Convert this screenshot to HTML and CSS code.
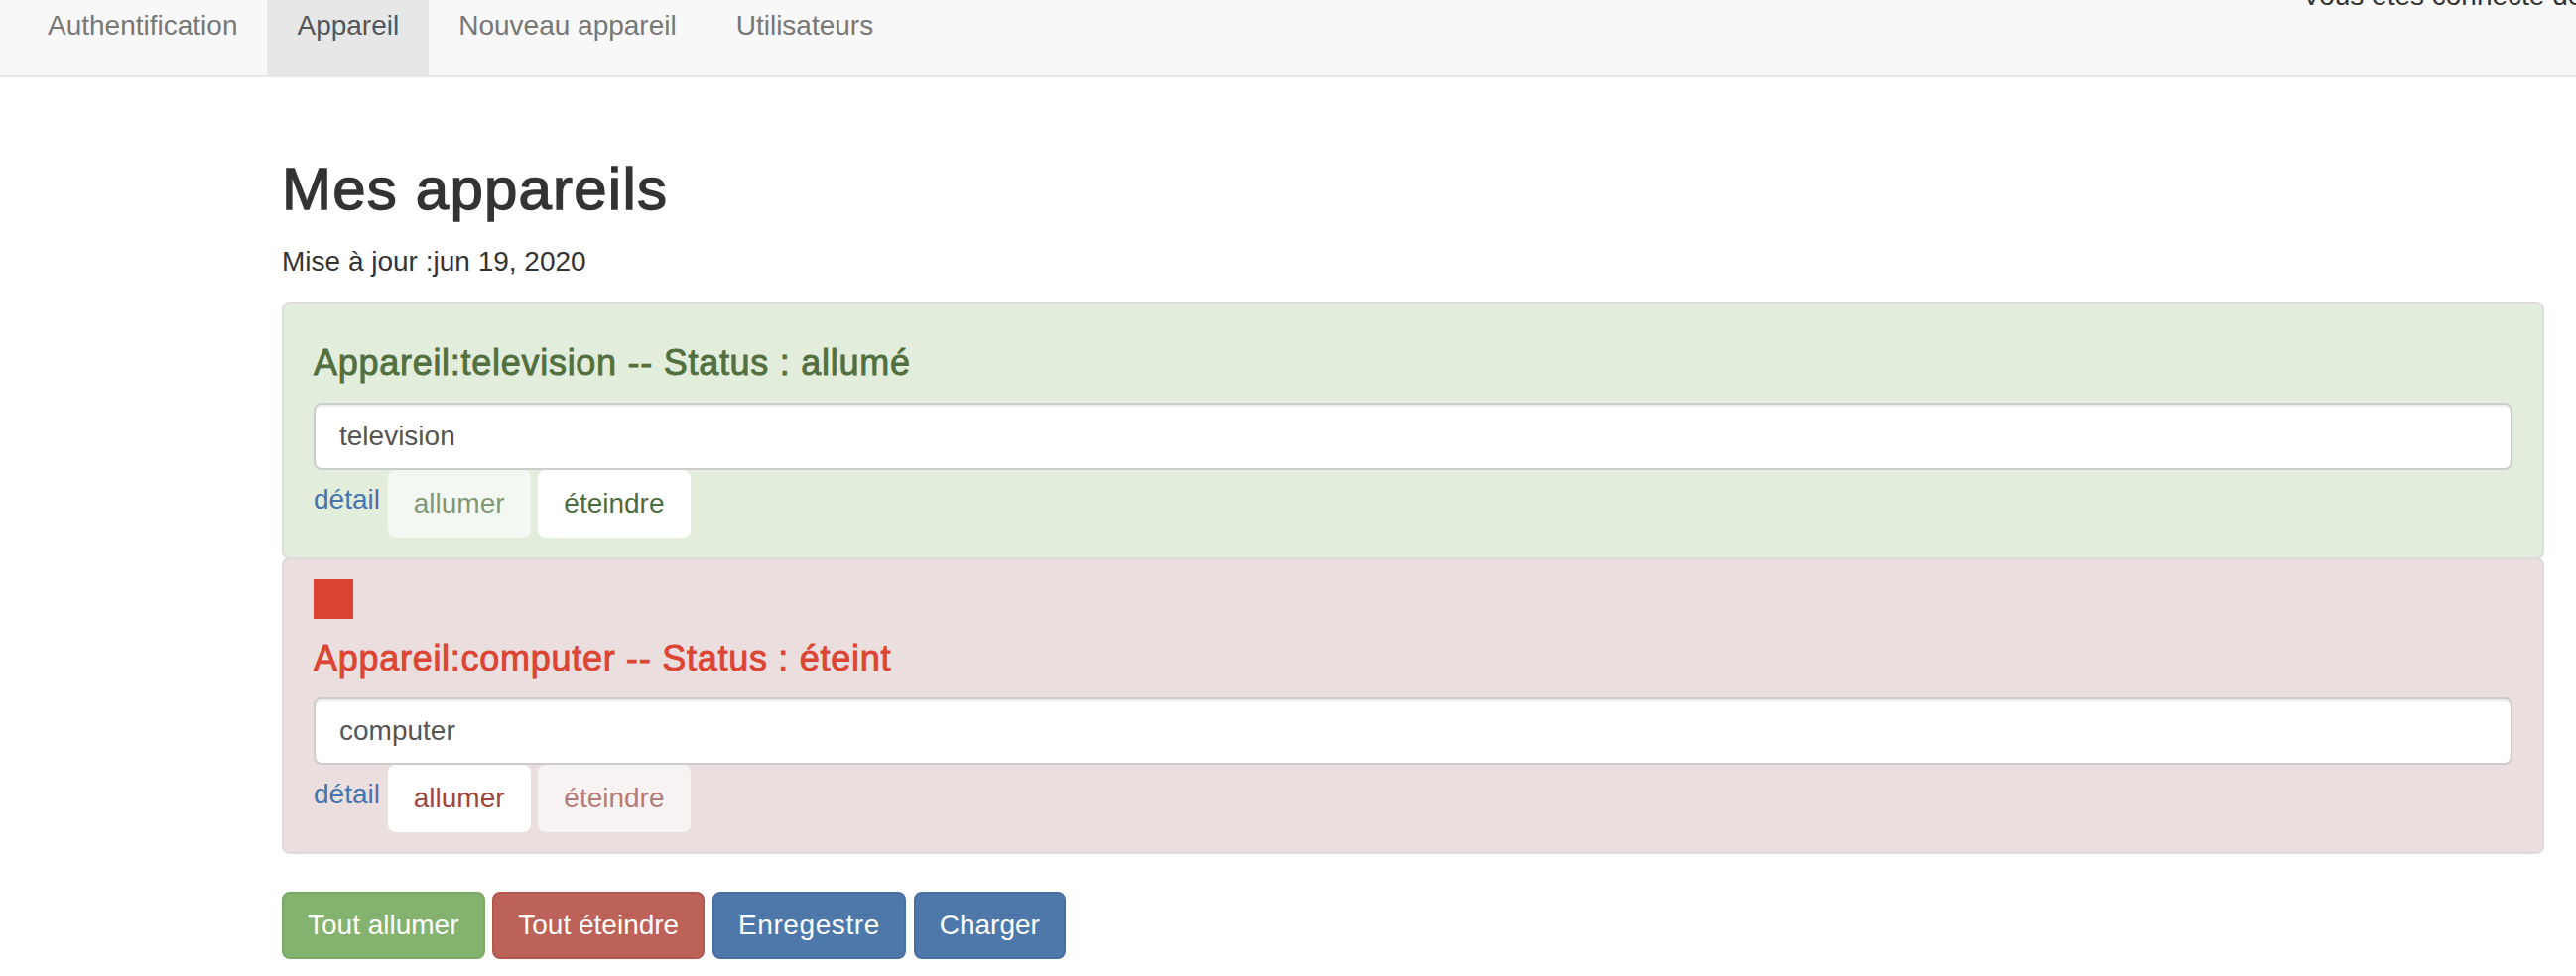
FILE: index.html
```html
<!DOCTYPE html>
<html lang="fr">
<head>
<meta charset="utf-8">
<title>Mes appareils</title>
<link rel="stylesheet" href="styles.css">
</head>
<body>
<nav class="navbar">
  <ul class="nav">
    <li><a href="#">Authentification</a></li>
    <li class="active"><a href="#">Appareil</a></li>
    <li><a href="#">Nouveau appareil</a></li>
    <li><a href="#">Utilisateurs</a></li>
  </ul>
  <p class="navbar-user">Vous êtes connecté depuis</p>
</nav>

<main class="container">
  <h2 class="page-title">Mes appareils</h2>
  <p class="updated">Mise à jour :jun 19, 2020</p>

  <ul class="list-group">
    <li class="device device-on">
      <h4 class="device-title">Appareil:television -- Status : allumé</h4>
      <input class="form-control" type="text" value="television">
      <div class="device-actions">
        <a class="detail-link" href="#">détail</a>
        <button class="btn btn-plain" disabled>allumer</button>
        <button class="btn btn-plain">éteindre</button>
      </div>
    </li>
    <li class="device device-off">
      <div class="status-square"></div>
      <h4 class="device-title">Appareil:computer -- Status : éteint</h4>
      <input class="form-control" type="text" value="computer">
      <div class="device-actions">
        <a class="detail-link" href="#">détail</a>
        <button class="btn btn-plain">allumer</button>
        <button class="btn btn-plain" disabled>éteindre</button>
      </div>
    </li>
  </ul>

  <div class="toolbar">
    <button class="btn btn-success">Tout allumer</button>
    <button class="btn btn-danger">Tout éteindre</button>
    <button class="btn btn-primary btn-save">Enregestre</button>
    <button class="btn btn-primary">Charger</button>
  </div>
</main>
</body>
</html>
```

FILE: styles.css
```css
html, body {
  margin: 0;
  padding: 0;
  background: #ffffff;
}

body {
  font-family: "Liberation Sans", Arial, Helvetica, sans-serif;
  font-size: 28px;
  line-height: 1.42857;
  color: #333333;
}

/* ---------- navbar ---------- */
.navbar {
  display: grid;
  grid-template-columns: 2320px 1fr;
  height: 100px;
  margin-top: -24px;
  margin-bottom: 40px;
  background: #f8f8f8;
  border-bottom: 2px solid #e7e7e7;
  overflow: hidden;
}

.nav {
  display: flex;
  margin: 0;
  padding: 0 0 0 18px;
  list-style: none;
}

.nav a {
  display: block;
  padding: 30px 30px;
  line-height: 40px;
  color: #777777;
  text-decoration: none;
}

.nav .active a {
  background: #e7e7e7;
  color: #555555;
}

.navbar-user {
  margin: 0;
  line-height: 40px;
  white-space: nowrap;
  color: #333333;
}

/* ---------- content ---------- */
.container {
  display: flow-root;
  width: 2280px;
  margin-left: 284px;
}

.page-title {
  margin: 40px 0 20px;
  font-size: 60px;
  font-weight: normal;
  line-height: 1.1;
  letter-spacing: 1.2px;
  -webkit-text-stroke: 1.4px #333333;
  color: #333333;
}

.updated {
  margin: 0 0 20px;
}

.list-group {
  margin: 0 0 40px;
  padding: 0;
  list-style: none;
}

.device {
  padding: 20px 30px;
  border: 2px solid #dcdcdc;
  border-radius: 8px;
  margin-bottom: -2px;
}

.device-on {
  background: #e2eddb;
  color: #4c6c3d;
}

.device-off {
  background: #eadfde;
  color: #9b4740;
}

.device-title {
  margin: 20px 0;
  font-size: 36px;
  font-weight: normal;
  line-height: 1.1;
  letter-spacing: 0.72px;
  -webkit-text-stroke: 0.9px currentColor;
}

.device-on .device-title {
  color: #52703f;
}

.device-off .device-title {
  color: #dc4434;
}

.status-square {
  width: 40px;
  height: 40px;
  background: #db4433;
}

.form-control {
  display: block;
  width: 100%;
  box-sizing: border-box;
  height: 68px;
  padding: 12px 24px;
  font-family: inherit;
  font-size: 28px;
  line-height: 40px;
  color: #555555;
  background: #ffffff;
  border: 2px solid #cccccc;
  border-radius: 8px;
  box-shadow: inset 0 2px 2px rgba(0, 0, 0, 0.075);
}

.device-actions {
  line-height: 40px;
}

.detail-link {
  color: #4774ae;
  text-decoration: none;
  vertical-align: 4px;
}

.btn {
  display: inline-block;
  margin: 0;
  padding: 12px 24px;
  font-family: inherit;
  font-size: 28px;
  line-height: 40px;
  border: 2px solid transparent;
  border-radius: 8px;
  vertical-align: baseline;
  cursor: pointer;
}

.btn-plain {
  background: #ffffff;
  color: inherit;
}

.btn:disabled {
  opacity: 0.65;
  cursor: not-allowed;
}

.btn-success {
  background: #84b26f;
  border-color: #7aa965;
  color: #ffffff;
}

.btn-danger {
  background: #bc6259;
  border-color: #b3574f;
  color: #ffffff;
}

.btn-primary {
  background: #4f78aa;
  border-color: #476fa0;
  color: #ffffff;
}

.btn-save {
  letter-spacing: 0.6px;
}
```
